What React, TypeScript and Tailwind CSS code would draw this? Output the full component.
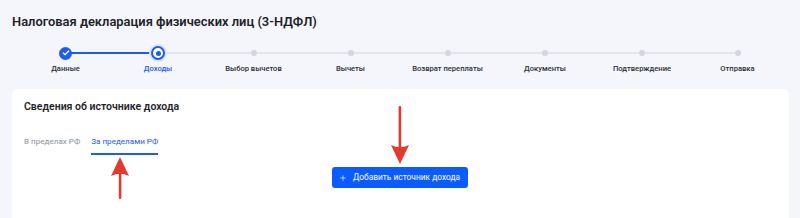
import { Check, Plus } from 'lucide-react'

const steps = [
  'Данные',
  'Доходы',
  'Выбор вычетов',
  'Вычеты',
  'Возврат переплаты',
  'Документы',
  'Подтверждение',
  'Отправка',
]

function StepDot({ index }: { index: number }) {
  if (index === 0) {
    return (
      <div className="w-[13px] h-[13px] rounded-full bg-[#1c5cf2] flex items-center justify-center">
        <Check className="w-[8px] h-[8px] text-white" strokeWidth={4} />
      </div>
    )
  }
  if (index === 1) {
    return (
      <div className="w-[14px] h-[14px] rounded-full bg-white border-2 border-[#1c5cf2] ring-2 ring-[#dbe6ff] flex items-center justify-center">
        <div className="w-[5px] h-[5px] rounded-full bg-[#1c5cf2]" />
      </div>
    )
  }
  return <div className="w-[6px] h-[6px] rounded-full bg-[#d3d6dc]" />
}

// red annotation arrow, tip at the top
function Arrow({ length, down }: { length: number; down?: boolean }) {
  return (
    <svg
      width="18"
      height={length}
      viewBox={`0 0 18 ${length}`}
      className={down ? 'rotate-180' : ''}
    >
      <rect x="7.8" y="14" width="2.6" height={length - 15} rx="1.3" fill="#e5392f" />
      <path d="M9 0 L18 19 Q9 14.5 0 19 Z" fill="#e5392f" />
    </svg>
  )
}

export default function App() {
  return (
    <div
      className="relative w-[800px] h-[218px] overflow-hidden bg-[#f4f6fc] text-[#1f2329]"
      style={{ fontFamily: 'Roboto, "Noto Sans", sans-serif' }}
    >
      <div className="pt-[12px] pl-[12px]">
        <h1 className="text-[12.9px] leading-[20px] font-semibold text-[#1e2228]">
          Налоговая декларация физических лиц (3-НДФЛ)
        </h1>
      </div>

      {/* Stepper */}
      <div className="relative ml-[20px] mt-[13px] w-[765px]">
        <div className="absolute left-[46px] right-[47px] top-[7px] h-[2px] bg-[#e3e5ea]" />
        <div className="absolute left-[46px] w-[91px] top-[7px] h-[2px] bg-[#1c5cf2]" />
        <div className="relative grid grid-cols-[91px_94px_97px_97px_97px_98px_96px_95px]">
          {steps.map((step, i) => (
            <div key={step} className="flex flex-col items-center">
              <div className="h-[16px] flex items-center justify-center">
                <StepDot index={i} />
              </div>
              <span
                className={`mt-[3px] text-[7.6px] leading-[10px] font-medium whitespace-nowrap ${
                  i === 1 ? 'text-[#1c5cf2]' : 'text-[#2a2e34]'
                }`}
              >
                {step}
              </span>
            </div>
          ))}
        </div>
      </div>

      {/* Card */}
      <div className="ml-[12px] mr-[11px] mt-[15px] h-[200px] bg-white rounded-[6px] px-[12px] pt-[11px]">
        <h2 className="text-[10.5px] leading-[14px] font-semibold text-[#1f2329]">
          Сведения об источнике дохода
        </h2>
        <div className="mt-[21px] flex gap-[11px] text-[8.1px] leading-[12px]">
          <div className="pb-[7px] text-[#8b9099]">В пределах РФ</div>
          <div className="pb-[6px] text-[#1c5cf2] border-b-2 border-[#1c5cf2]">За пределами РФ</div>
        </div>
        <div className="mt-[12px] flex justify-center">
          <button className="ml-[-2px] h-[21px] w-[136px] rounded-[3px] bg-[#0b5cff] text-white text-[8.4px] flex items-center justify-center gap-[6px]">
            <Plus className="w-[8px] h-[8px]" strokeWidth={2} />
            Добавить источник дохода
          </button>
        </div>
      </div>

      {/* Annotation arrows */}
      <div className="absolute left-[111px] top-[157px] flex">
        <Arrow length={43} />
      </div>
      <div className="absolute left-[391px] top-[105px] flex">
        <Arrow length={59} down />
      </div>
    </div>
  )
}
